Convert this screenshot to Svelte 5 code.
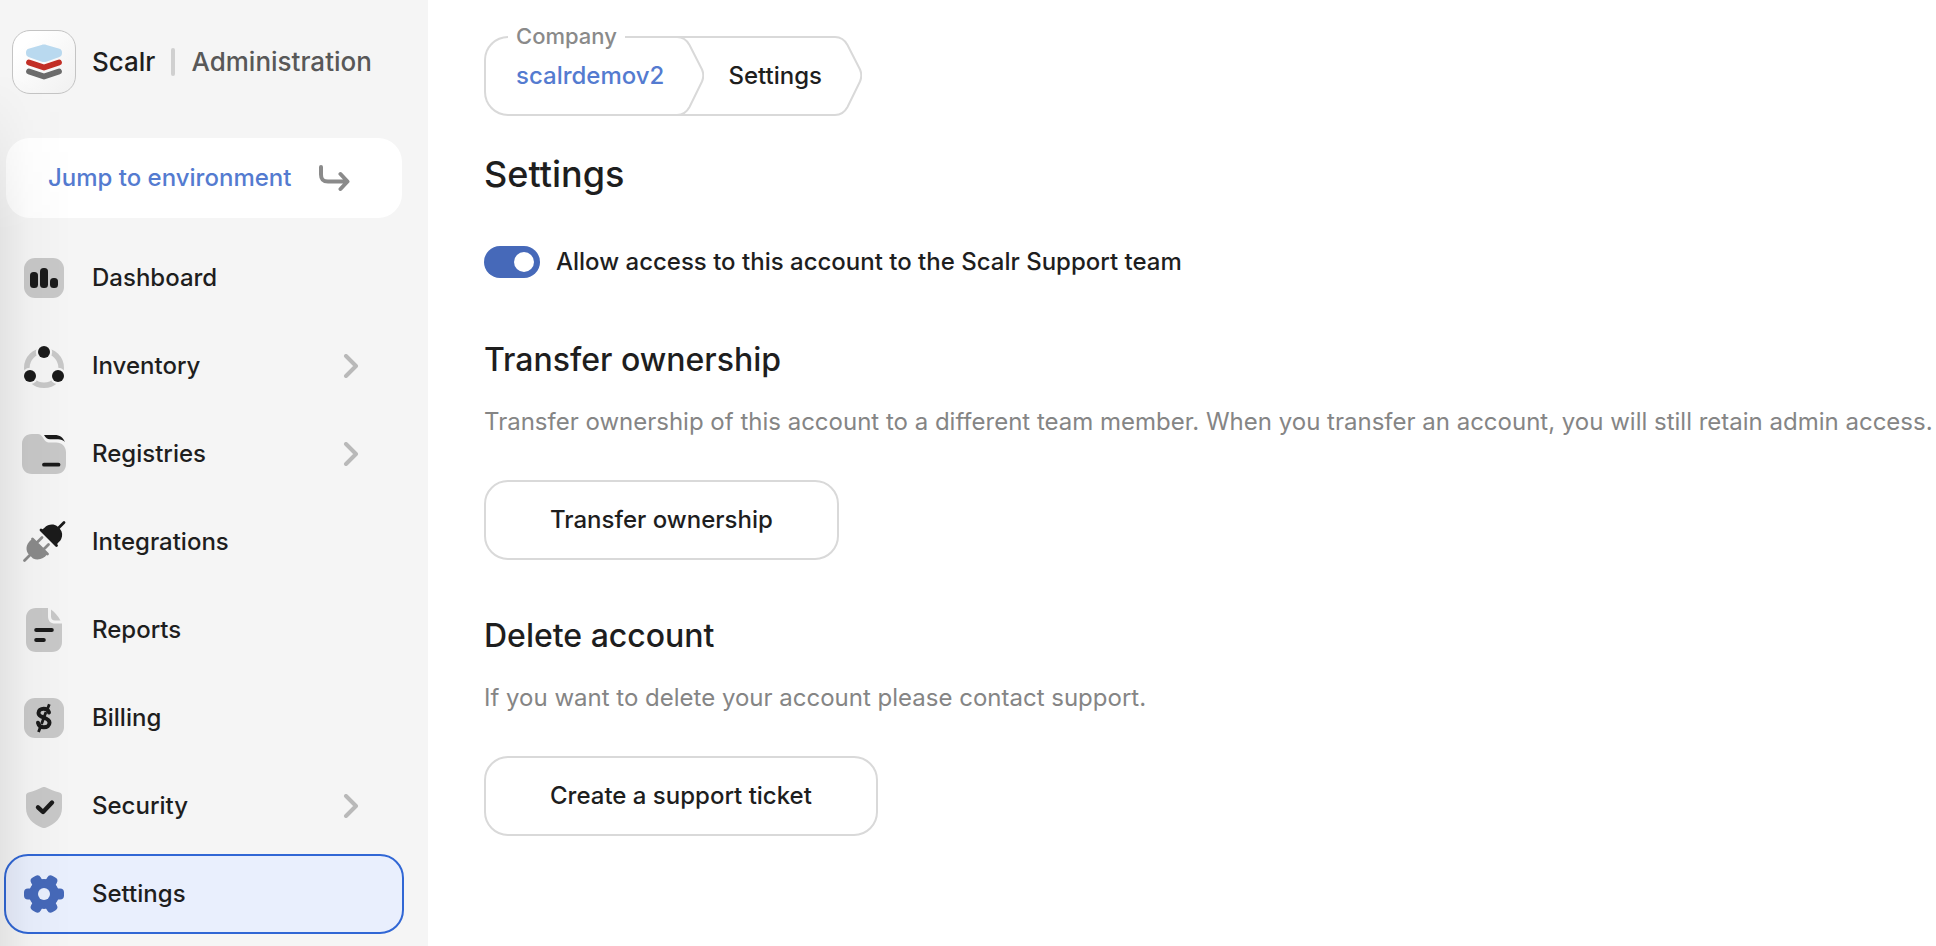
<script lang="ts">
  type NavItem = { id: string; label: string; nested?: boolean }

  const navItems: NavItem[] = [
    { id: 'dashboard', label: 'Dashboard' },
    { id: 'inventory', label: 'Inventory', nested: true },
    { id: 'registries', label: 'Registries', nested: true },
    { id: 'integrations', label: 'Integrations' },
    { id: 'reports', label: 'Reports' },
    { id: 'billing', label: 'Billing' },
    { id: 'security', label: 'Security', nested: true },
    { id: 'settings', label: 'Settings' },
  ]

  let active = $state('settings')
  let supportAccess = $state(true)

  function select(e: MouseEvent, id: string) {
    e.preventDefault()
    active = id
  }
</script>

{#snippet navIcon(id: string)}
  <svg class="nav-icon" viewBox="0 0 44 44" aria-hidden="true">
    {#if id === 'dashboard'}
      <rect class="soft" x="2" y="2" width="40" height="40" rx="11" />
      <rect class="ink" x="8" y="16" width="8" height="16" rx="3.5" />
      <rect class="ink" x="18" y="12" width="8" height="20" rx="3.5" />
      <rect class="ink" x="28" y="22" width="8" height="10" rx="3.5" />
    {:else if id === 'inventory'}
      <mask id="ring-gaps">
        <rect width="44" height="46" fill="#fff" />
        <circle cx="22" cy="8" r="8.2" />
        <circle cx="8" cy="32" r="8.2" />
        <circle cx="36" cy="32" r="8.2" />
      </mask>
      <circle class="soft-line" cx="22" cy="24" r="17.2" stroke-width="5.6" mask="url(#ring-gaps)" />
      <circle class="ink" cx="22" cy="8" r="6" />
      <circle class="ink" cx="8" cy="32" r="6" />
      <circle class="ink" cx="36" cy="32" r="6" />
    {:else if id === 'registries'}
      <path class="soft" d="M10 2h6c2 0 3 1 4.500 3l2 3c1.500 2 3 2.600 5.500 2.600h6c6 0 10 4 10 10V32c0 6-4 10-10 10H10C4 42 0 38 0 32V12C0 6 4 2 10 2z" />
      <path class="ink" d="M22 3h10.500c5.500 0 8.500 2.500 10.500 7-2-1.600-4-2.700-7-2.700h-8c-3 0-4-1.300-6-4.300z" />
      <path class="ink-line" d="M22 32.700h14.500" stroke-width="3.800" />
    {:else if id === 'integrations'}
      <path class="mid-line" d="M2.500 40.500l6.500-6.500M15 22.500l5-5M21.500 29.500l5-5M10.500 19L25.500 34" stroke-width="2.800" />
      <path class="mid" d="M10.500 19L25.500 34c-3.500 4.500-9 7-14.500 4.500L6 33.500C2.500 28 5.500 22 10.500 19z" />
      <path class="ink-line" d="M42 2.500l-6 6M19 10L34.500 25.500" stroke-width="2.800" />
      <path class="ink" d="M19 10c3-1 4-3.500 7-4.700 3.500-1.300 6.500-1 9.500 1.200l2.500 2.500c2.500 3 2.800 6.500 1.200 10-1 2.500-3.700 3.500-4.700 6.500z" />
    {:else if id === 'reports'}
      <path class="soft" d="M14 0h12v8c0 5 2.500 7.500 7 7.500h7V34c0 6-4 10-10 10H14C8 44 4 40 4 34V10C4 4 8 0 14 0z" />
      <path class="soft" d="M29 1.500c4 3 7 6.500 9.500 11H33c-2.500 0-4-1.500-4-4z" />
      <path class="ink-line" d="M14.200 22h15.600M14.200 32h7.600" stroke-width="4" />
    {:else if id === 'billing'}
      <rect class="soft" x="2" y="2" width="40" height="40" rx="11" />
      <path class="ink-line" d="M27 16.500c-1-3-3-3.700-5.300-3.700-3 0-5.200 1.600-5.200 4.200 0 5.500 11 4 11 9.800 0 2.800-2.500 4.500-5.600 4.500-3.100 0-5.200-1.500-5.900-4.500" stroke-width="4" />
      <path class="ink-line butt" d="M27.300 8.300l-2.500 6.500M19 29.500l-2.500 6.500M24 16l-4.500 12" stroke-width="2.800" />
    {:else if id === 'security'}
      <path class="soft" d="M20.500 3.300c1-.5 2-.5 3 0 4.500 2.300 9 4 14 5.200 1.700.5 2.500 1.500 2.500 3.200V24c0 9.500-7 16.500-16.200 19.700-1.200.4-2.400.4-3.600 0C11 40.500 4 33.500 4 24V11.700c0-1.700.8-2.700 2.500-3.200 5-1.200 9.500-2.900 14-5.200z" />
      <path class="ink-line" d="M16 23.300l5 4.700 9-9.500" stroke-width="4.400" />
    {:else}
      <mask id="gear-hole">
        <rect width="44" height="44" fill="#fff" />
        <circle cx="22" cy="22" r="6" />
      </mask>
      <g class="accent" mask="url(#gear-hole)">
        <circle cx="22" cy="22" r="15" />
        <rect x="2" y="16.5" width="40" height="11" rx="4" />
        <rect x="2" y="16.5" width="40" height="11" rx="4" transform="rotate(60 22 22)" />
        <rect x="2" y="16.5" width="40" height="11" rx="4" transform="rotate(120 22 22)" />
      </g>
    {/if}
  </svg>
{/snippet}

{#snippet crumbTip()}
  <svg class="crumb-tip" viewBox="0 0 30 80" aria-hidden="true">
    <path d="M0 1h3c6 0 9.500 2.500 12.500 8L28 33.500c1.700 4 1.700 8 0 12L15.500 71C12.500 76.500 9 79 3 79H0" />
  </svg>
{/snippet}

<div class="app">
  <aside class="sidebar">
    <header class="brand">
      <span class="logo">
        <svg viewBox="0 0 36 36" aria-hidden="true">
          <path fill="#b9d9ef" d="M15.500.9c1.700-.5 3.300-.5 5 0l13 3.800C35.300 5.300 36 6.500 36 8.800s-.7 3.500-2.500 4.100l-12.500 4.500c-2 .7-4 .7-6 0L2.500 12.900C.7 12.300 0 11.100 0 8.800s.7-3.500 2.500-4.100z" />
          <path fill="none" stroke="#c22f26" stroke-width="5.800" stroke-linecap="round" stroke-linejoin="round" d="M3 18.500l15 5 15-5" />
          <path fill="none" stroke="#6b6b6b" stroke-width="5.800" stroke-linecap="round" stroke-linejoin="round" d="M3 27.500l15 5 15-5" />
        </svg>
      </span>
      <span class="brand-name">Scalr</span>
      <span class="brand-divider"></span>
      <span class="brand-scope">Administration</span>
    </header>

    <button class="jump-btn">
      Jump to environment
      <svg viewBox="0 0 32 28" aria-hidden="true">
        <path d="M3 3v7.500c0 5 2 7 7 7h19M22.500 10l7 7.500-7 7.500" />
      </svg>
    </button>

    <nav class="nav" aria-label="Administration">
      {#each navItems as item}
        <a
          class="nav-item"
          class:active={active === item.id}
          href="#{item.id}"
          onclick={(e) => select(e, item.id)}
        >
          {@render navIcon(item.id)}
          <span class="nav-label">{item.label}</span>
          {#if item.nested}
            <svg class="chevron" viewBox="0 0 24 24" aria-hidden="true">
              <path d="M6 2l10 10L6 22" />
            </svg>
          {/if}
        </a>
      {/each}
    </nav>
  </aside>

  <main class="content">
    <nav class="crumbs" aria-label="Breadcrumb">
      <div class="crumb">
        <div class="crumb-body">
          <span class="crumb-caption">Company</span>
          <a href="#company">scalrdemov2</a>
        </div>
        {@render crumbTip()}
      </div>
      <div class="crumb">
        <div class="crumb-body">
          <span>Settings</span>
        </div>
        {@render crumbTip()}
      </div>
    </nav>

    <h1>Settings</h1>

    <label class="toggle">
      <input type="checkbox" bind:checked={supportAccess} />
      Allow access to this account to the Scalr Support team
    </label>

    <section>
      <h2>Transfer ownership</h2>
      <p>
        Transfer ownership of this account to a different team member. When you transfer an account, you will still retain admin access.
      </p>
      <button class="action-btn">Transfer ownership</button>
    </section>

    <section>
      <h2>Delete account</h2>
      <p>If you want to delete your account please contact support.</p>
      <button class="action-btn">Create a support ticket</button>
    </section>
  </main>
</div>

<style>
  :global(body) {
    background: #fff;
  }
  .app {
    display: flex;
    min-height: 100vh;
    font-family: Inter, 'Liberation Sans', sans-serif;
    font-size: 24px;
    font-weight: 500;
    line-height: 32px;
    color: #1e1e1e;
  }
  .app * {
    box-sizing: border-box;
  }
  button {
    font: inherit;
    cursor: pointer;
  }
  a {
    color: inherit;
    text-decoration: none;
  }

  /* Sidebar */
  .sidebar {
    position: relative;
    flex: 0 0 428px;
    box-sizing: border-box;
    padding: 30px 24px 12px 4px;
    background: #f5f5f5;
  }
  /* soft shade along the window edge */
  .sidebar::after {
    content: '';
    position: absolute;
    top: 72px;
    bottom: 0;
    left: 0;
    width: 72px;
    background: linear-gradient(to right, rgba(0, 0, 0, 0.07), rgba(0, 0, 0, 0.02) 40%, transparent);
    mask-image: linear-gradient(to bottom, transparent, #000 160px);
    pointer-events: none;
  }
  .brand {
    display: flex;
    align-items: center;
    padding-left: 8px;
    margin-bottom: 44px;
  }
  .logo {
    display: flex;
    align-items: center;
    justify-content: center;
    width: 64px;
    height: 64px;
    margin-right: 16px;
    border: 1px solid #c4c4c4;
    border-radius: 18px;
    background: linear-gradient(135deg, #fff 20%, #f0f0f0);
  }
  .logo svg {
    width: 36px;
    height: 36px;
  }
  .brand-name,
  .brand-scope {
    font-size: 26px;
  }
  .brand-scope {
    color: #585858;
  }
  .brand-divider {
    width: 4px;
    height: 28px;
    margin: 0 16px;
    border-radius: 2px;
    background: #d0d0d0;
  }
  .jump-btn {
    display: flex;
    align-items: center;
    justify-content: space-between;
    width: calc(100% - 4px);
    height: 80px;
    margin: 0 2px 20px;
    padding: 0 52px 0 42px;
    border: none;
    border-radius: 24px;
    background: #fff;
    color: #547bd0;
  }
  .jump-btn svg {
    width: 32px;
    height: 28px;
    fill: none;
    stroke: #8a8a8a;
    stroke-width: 4;
    stroke-linecap: round;
    stroke-linejoin: round;
  }
  .nav {
    display: flex;
    flex-direction: column;
    gap: 8px;
  }
  .nav-item {
    display: flex;
    align-items: center;
    height: 80px;
    padding: 0 38px 0 16px;
    border: 2px solid transparent;
    border-radius: 24px;
  }
  .nav-item.active {
    border-color: #3167d5;
    background: #e9effd;
  }
  .nav-icon {
    width: 44px;
    height: 44px;
    margin-right: 26px;
    overflow: visible;
  }
  .nav-label {
    flex: 1;
  }
  .soft {
    fill: #c8c8c8;
  }
  .soft-line {
    fill: none;
    stroke: #c8c8c8;
  }
  .mid {
    fill: #8a8a8a;
  }
  .ink {
    fill: #1b1b1b;
  }
  .accent {
    fill: #4669b9;
  }
  .mid-line,
  .ink-line {
    fill: none;
    stroke: #1b1b1b;
    stroke-linecap: round;
    stroke-linejoin: round;
  }
  .mid-line {
    stroke: #8a8a8a;
  }
  .ink-line.butt {
    stroke-linecap: butt;
  }
  .chevron {
    width: 24px;
    height: 24px;
    fill: none;
    stroke: #b9b9b9;
    stroke-width: 4;
    stroke-linecap: round;
    stroke-linejoin: round;
  }

  /* Main column */
  .content {
    flex: 1;
    min-width: 0;
    padding: 36px 0 36px 56px;
  }
  .crumbs {
    display: flex;
    margin-bottom: 34px;
  }
  .crumb {
    display: flex;
    height: 80px;
  }
  .crumb + .crumb {
    margin-left: -30px;
  }
  .crumb-body {
    position: relative;
    display: flex;
    align-items: center;
    padding-left: 54px;
    padding-right: 10px;
    border-top: 2px solid #d9d9d9;
    border-bottom: 2px solid #d9d9d9;
  }
  .crumb:first-child .crumb-body {
    padding-left: 30px;
    border-left: 2px solid #d9d9d9;
    border-radius: 24px 0 0 24px;
  }
  .crumb a {
    color: #547bd0;
  }
  .crumb-caption {
    position: absolute;
    top: -18px;
    left: 22px;
    padding: 0 8px;
    background: #fff;
    color: #8a8a8a;
    font-size: 22px;
  }
  .crumb-tip {
    width: 30px;
    height: 80px;
    fill: none;
    stroke: #d9d9d9;
    stroke-width: 2;
  }
  h1 {
    margin: 0 0 48px;
    font-size: 36px;
    font-weight: 500;
    line-height: 48px;
  }
  .toggle {
    display: flex;
    align-items: center;
    gap: 16px;
    width: fit-content;
    margin-bottom: 62px;
    cursor: pointer;
  }
  .toggle input {
    appearance: none;
    display: flex;
    align-items: center;
    width: 56px;
    height: 32px;
    margin: 0;
    padding: 0 6px;
    border-radius: 16px;
    background: #b9b9b9;
    cursor: pointer;
  }
  .toggle input::before {
    content: '';
    width: 20px;
    height: 20px;
    border-radius: 50%;
    background: #fff;
  }
  .toggle input:checked {
    justify-content: flex-end;
    background: #4669b9;
  }
  section {
    margin-bottom: 56px;
  }
  h2 {
    margin: 0 0 26px;
    font-size: 32px;
    font-weight: 500;
    line-height: 40px;
  }
  p {
    margin: 0 0 42px;
    color: #858585;
    font-weight: 400;
  }
  .action-btn {
    height: 80px;
    padding: 0 64px;
    border: 2px solid #d9d9d9;
    border-radius: 24px;
    background: #fff;
    color: inherit;
  }
</style>
